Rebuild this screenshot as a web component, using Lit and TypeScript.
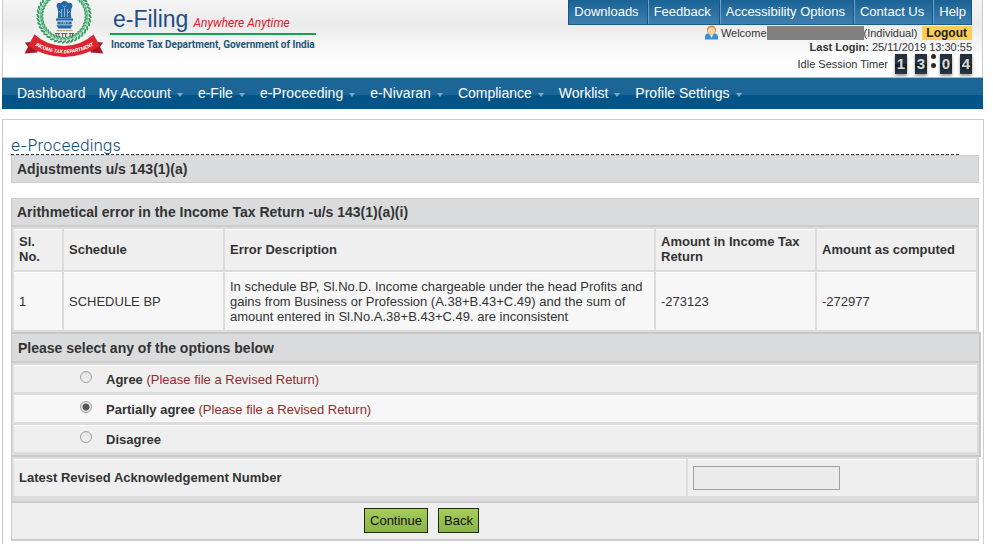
import { LitElement, html, css, svg } from "lit";
import { customElement, state, property } from "lit/decorators.js";

/* Department crest: wreath, lion capital and ribbon. */
@customElement("dept-emblem")
class DeptEmblem extends LitElement {
  static styles = css`
    :host { display: block; }
    svg { display: block; width: 82px; height: 60px; overflow: hidden; }
    .ribbon-text { font: italic bold 5px Roboto, "Liberation Sans", sans-serif; fill: #fff; }
  `;

  private leaves() {
    const out = [];
    for (let i = 0; i < 40; i++) {
      const a = i * 9;
      out.push(svg`<g transform="rotate(${a} 41 16)">
        <ellipse cx="41" cy="-10" rx="1" ry="2.6" fill="#2f9d5c" transform="rotate(58 41 -10)"/>
        <ellipse cx="41" cy="-6" rx="1" ry="2.5" fill="#45a96d" transform="rotate(120 41 -6)"/>
      </g>`);
    }
    return out;
  }

  render() {
    return html`
      <svg viewBox="0 0 82 60" role="img" aria-label="Income Tax Department emblem">
        ${this.leaves()}
        <circle cx="41" cy="16" r="23.8" fill="none" stroke="#2f9d5c" stroke-width="0.6"/>
        <g fill="#2668a6">
          <circle cx="41.5" cy="4.5" r="3.6"/>
          <circle cx="36.6" cy="5.8" r="3"/>
          <circle cx="46.4" cy="5.8" r="3"/>
          <path d="M34.4 7h14.2l-.8 6 .6 5.5H34.6l.6-5.5z"/>
          <path d="M33 18.6h17v2.2H33zM34.400 21.400h14.200v3.200H34.400z"/>
          <path d="M33.400 25.200h16.200l-2 3.200H35.400z"/>
        </g>
        <g stroke="#b9d4ea" stroke-width="0.7" fill="none">
          <path d="M39.5 5.5l2 1.6 2-1.6M41.5 8v9M38.6 9v8M44.4 9v8M36 11l1.8 2M47 11l-1.8 2M35 21.1h13"/>
          <circle cx="41.5" cy="23" r="1.1"/>
          <path d="M37 23h2M44 23h2"/>
        </g>
        <path d="M33 30.6h17M35 29.6v2M38 29.6v2.4M41 29.6v2M44 29.6v2.4M47 29.6v2" stroke="#c59a52" stroke-width="0.8" fill="none"/>
        <path d="M32 33.6h5M38.4 33.6h6M46 33.6h5M33.2 33.6v3M35.8 33.6v3.4M39.6 33.6v3M42.6 33.6v3.4M47.2 33.6v3M49.6 33.6v3" stroke="#4c4a48" stroke-width="0.9" fill="none"/>
        <path d="M9 42L2 42.6 5 47 1.6 53.6 14 52.6 16 48z" fill="#a81822"/>
        <path d="M73 42l7 .6L77 47l3.4 6.6L68 52.6 66 48z" fill="#a81822"/>
        <path d="M11.500 34.600Q23 45.400 41.200 46 59 45.400 70.500 34.600L77 46Q61 56.400 41.200 57 21 56.400 5 46z" fill="#dc2530"/>
        <path id="ribbon" d="M7 42.400Q22 52.800 41.200 53.400 60 52.800 76 42.400" fill="none"/>
        <text class="ribbon-text"><textPath href="#ribbon" startOffset="50%" text-anchor="middle">INCOME TAX DEPARTMENT</textPath></text>
      </svg>`;
  }
}

@customElement("session-timer")
class SessionTimer extends LitElement {
  @property() minutes = "13";
  @property() seconds = "04";
  static styles = css`
    :host { display: flex; align-items: center; gap: 8px; }
    .tile {
      width: 12px; height: 20px; line-height: 20px; text-align: center;
      font-size: 15px; font-weight: bold; color: #d8d8d8;
      background: linear-gradient(#24303a 48%, #111a22 52%, #2c3a46);
      box-shadow: 0 2px 3px #999;
    }
    .colon { display: flex; flex-direction: column; gap: 4px; margin: 0 -4px 6px -4px; }
    .dot { width: 5px; height: 5px; border-radius: 50%; background: #2a2a2a; }
  `;
  render() {
    const tile = (d: string) => html`<span class="tile">${d}</span>`;
    return html`
      ${[...this.minutes].map(tile)}
      <span class="colon"><span class="dot"></span><span class="dot"></span></span>
      ${[...this.seconds].map(tile)}`;
  }
}

@customElement("app-root")
class AppRoot extends LitElement {
  @state() private choice = "partial";

  static styles = css`
    :host {
      display: flex; flex-direction: column; box-sizing: border-box;
      min-height: 100vh; padding: 0 9px 0 2px; background: #fff; color: #333;
      font: 13px/15px "Liberation Sans", Arial, sans-serif;
    }
    * { box-sizing: border-box; }
    a { color: inherit; text-decoration: none; }

    .banner {
      display: flex; justify-content: space-between; height: 77px; margin-right: 1px;
      padding: 0 10px 0 20px; border: 1px solid #ccc; border-width: 0 1px;
      background: linear-gradient(#f5f5f5, #ebebeb 24px, #fff 62px, #fff);
    }
    .brand { display: flex; gap: 5px; }
    .title { display: flex; align-items: baseline; gap: 5px; padding: 6px 3px 0; height: 33px; line-height: 26px; }
    .name { font-size: 23px; color: #1d4f86; }
    .tag { font: italic 12px Roboto, "Liberation Sans", sans-serif; color: #d8202c; }
    .dept {
      min-width: 205px; border-top: 2px solid #1ba04e; padding: 2px 1px 0; white-space: nowrap; color: #1d5578;
      font: bold 10px/16px Roboto, "Liberation Sans", sans-serif;
    }

    .account { display: flex; flex-direction: column; align-items: flex-end; font-size: 11px; line-height: 14px; white-space: nowrap; }
    .links { display: flex; height: 25px; background: linear-gradient(#1a6294, #3f7fae); border-bottom: 1px solid #1a5c8c; color: #fff; font-size: 13px; line-height: 23px; }
    .links a { padding: 0 8px 0 5px; border-left: 1px solid #6ea3c8; border-right: 1px solid #12568a; }
    .links a:last-child { padding-right: 5px; }
    .links a:first-child { border-left-color: #12568a; }
    .welcome { display: flex; align-items: center; height: 15px; }
    .user { width: 15px; height: 15px; margin-right: 2px; }
    .masked { width: 97px; height: 14px; background: #808080; }
    .logout { padding: 0 5px 0 4px; margin-left: 5px; background: #fdcf50; color: #222; font-size: 12px; font-weight: bold; }
    .idle { display: flex; align-items: center; gap: 7px; height: 20px; }

    .menu {
      display: flex; height: 32px; margin-right: 1px; padding-left: 15px; color: #fff; font-size: 14px; line-height: 30px;
      background: linear-gradient(#1b6697 17px, #005487 17px); border-top: 1px solid #9fc0d4;
      white-space: nowrap;
    }
    .menu a { display: flex; align-items: center; gap: 6px; height: 30px; margin-right: 15px; }
    .menu a:first-child { margin-right: 13px; }
    .caret { border: 3px solid transparent; border-top: 4px solid #7fa9c4; border-bottom: 0; margin-top: 4px; }

    .page { flex: 1; margin-top: 10px; padding: 16px 4px 4px 8px; border: 1px solid #ccc; border-bottom: 0; }
    h1 {
      margin: 0 20px 0 0; height: 19px; border-bottom: 1px dashed #333; color: #1a5578;
      font: 300 16px/18px Inter, "DejaVu Sans", sans-serif;
    }
    .bar { margin: 0; height: 28px; padding: 0 5px; background: #dadbdd; border: 1px solid #ccc; font-size: 14px; font-weight: bold; line-height: 26px; text-align: left; }
    h2.bar { margin-bottom: 15px; }

    .grid { border: 1px solid #ccc; border-bottom: 0; background: #dcdcdc; }
    .grid .bar { border-width: 0 0 2px; line-height: 27px; }
    table { width: 100%; table-layout: fixed; border-spacing: 2px; text-align: left; }
    th, td { padding: 5px; background: #f7f7f7; border-top: 1px solid #fff; vertical-align: middle; }
    th { background: #efefef; height: 41px; padding: 4px 5px 6px; }
    td { height: 58px; }
    .c-no { width: 48px; }
    .c-mid { width: 159px; }

    fieldset { margin: 0 -2px 0 0; padding: 0; border: 2px solid #c9c9c9; border-left-width: 1px; background: #dcdcdc; }
    fieldset .bar { border-width: 0 0 2px; padding: 0 6px; height: 29px; line-height: 28px; }
    .options { display: grid; gap: 3px; padding: 2px 2px 3px; }
    .option { display: flex; align-items: center; height: 27px; padding-left: 66px; background: #efefef; border-top: 1px solid #fff; font-weight: bold; }
    .option:nth-child(2) { background: #f7f7f7; }
    .option small { font-size: 13px; font-weight: normal; color: #932b28; white-space: pre; }
    input[type="radio"] {
      appearance: none; width: 12px; height: 12px; margin: 0 14px 4px 0; border: 1px solid #a0a0a0; border-radius: 50%;
      background: linear-gradient(#e2e2e2, #f2f2f2);
    }
    input[type="radio"]:checked { background: radial-gradient(circle, #555 3px, #eee 4px); }

    .ack { display: grid; grid-template-columns: 7fr 3fr; gap: 2px; padding: 2px 2px 5px; background: #dcdcdc; border: 1px solid #ccc; border-width: 0 1px; }
    .ack > * { height: 37px; padding: 0 5px; background: #efefef; border-top: 1px solid #fff; display: flex; align-items: center; font-weight: bold; }
    .ack label { padding-bottom: 2px; }
    input[type="text"] { width: 147px; height: 24px; border: 1px solid #a0a0a0; background: #ebebeb; padding: 0 4px; font: inherit; }

    .actions {
      display: flex; justify-content: center; align-items: center; gap: 10px; height: 40px; padding: 0 147px 2px 0;
      background: #efefef; border: 1px solid #ccc; border-width: 2px 1px;
    }
    button {
      height: 25px; padding: 0 5px; border: 1px solid #1f2d0c; background: linear-gradient(#a6cc5c, #8ab548);
      color: #111; font: 13px "Liberation Sans", Arial, sans-serif;
    }
  `;

  private option(value: string, label: string, note = "") {
    return html`
      <label class="option">
        <input type="radio" name="response" .checked=${this.choice === value} @change=${() => (this.choice = value)} />
        ${label}${note ? html`<small> ${note}</small>` : ""}
      </label>`;
  }

  render() {
    const links = ["Downloads", "Feedback", "Accessibility Options", "Contact Us", "Help"];
    const menu = ["My Account", "e-File", "e-Proceeding", "e-Nivaran", "Compliance", "Worklist", "Profile Settings"];
    return html`
      <header class="banner">
        <div class="brand">
          <dept-emblem></dept-emblem>
          <div>
            <div class="title"><span class="name">e-Filing</span><span class="tag">Anywhere Anytime</span></div>
            <div class="dept">Income Tax Department, Government of India</div>
          </div>
        </div>
        <div class="account">
          <nav class="links">${links.map((l) => html`<a href="#">${l}</a>`)}</nav>
          <div class="welcome">
            <svg class="user" viewBox="0 0 15 15" aria-hidden="true">
              <path d="M1 14.5V12q0-3 3.5-3.4h6Q14 9 14 12v2.500z" fill="#3d8fd1"/>
              <path d="M5.500 9h4L7.500 13z" fill="#e8f3fb"/>
              <circle cx="7.500" cy="5" r="4.600" fill="#d9893b"/>
              <circle cx="7.500" cy="5.800" r="3.600" fill="#fbd3a0"/>
            </svg>
            <span>Welcome</span><span class="masked"></span><span>(Individual)</span>
            <a class="logout" href="#">Logout</a>
          </div>
          <div><b>Last Login:</b> 25/11/2019 13:30:55</div>
          <div class="idle"><span>Idle Session Timer</span><session-timer></session-timer></div>
        </div>
      </header>
      <nav class="menu">
        <a href="#">Dashboard</a>
        ${menu.map((m) => html`<a href="#">${m}<span class="caret"></span></a>`)}
      </nav>
      <main class="page">
        <h1>e-Proceedings</h1>
        <h2 class="bar">Adjustments u/s 143(1)(a)</h2>
        <section class="grid">
          <h3 class="bar" id="err">Arithmetical error in the Income Tax Return -u/s 143(1)(a)(i)</h3>
          <table aria-labelledby="err">
            <colgroup><col class="c-no" /><col class="c-mid" /><col /><col class="c-mid" /><col class="c-mid" /></colgroup>
            <thead>
              <tr><th>Sl. No.</th><th>Schedule</th><th>Error Description</th><th>Amount in Income Tax Return</th><th>Amount as computed</th></tr>
            </thead>
            <tbody>
              <tr>
                <td>1</td>
                <td>SCHEDULE BP</td>
                <td>In schedule BP, Sl.No.D. Income chargeable under the head Profits and gains from Business or Profession (A.38+B.43+C.49) and the sum of amount entered in Sl.No.A.38+B.43+C.49. are inconsistent</td>
                <td>-273123</td>
                <td>-272977</td>
              </tr>
            </tbody>
          </table>
        </section>
        <fieldset aria-labelledby="opt">
          <h3 class="bar" id="opt">Please select any of the options below</h3>
          <div class="options">
            ${this.option("agree", "Agree", "(Please file a Revised Return)")}
            ${this.option("partial", "Partially agree", "(Please file a Revised Return)")}
            ${this.option("disagree", "Disagree")}
          </div>
        </fieldset>
        <div class="ack">
          <label for="ack-number">Latest Revised Acknowledgement Number</label>
          <div><input id="ack-number" type="text" /></div>
        </div>
        <div class="actions"><button>Continue</button><button>Back</button></div>
      </main>`;
  }
}
